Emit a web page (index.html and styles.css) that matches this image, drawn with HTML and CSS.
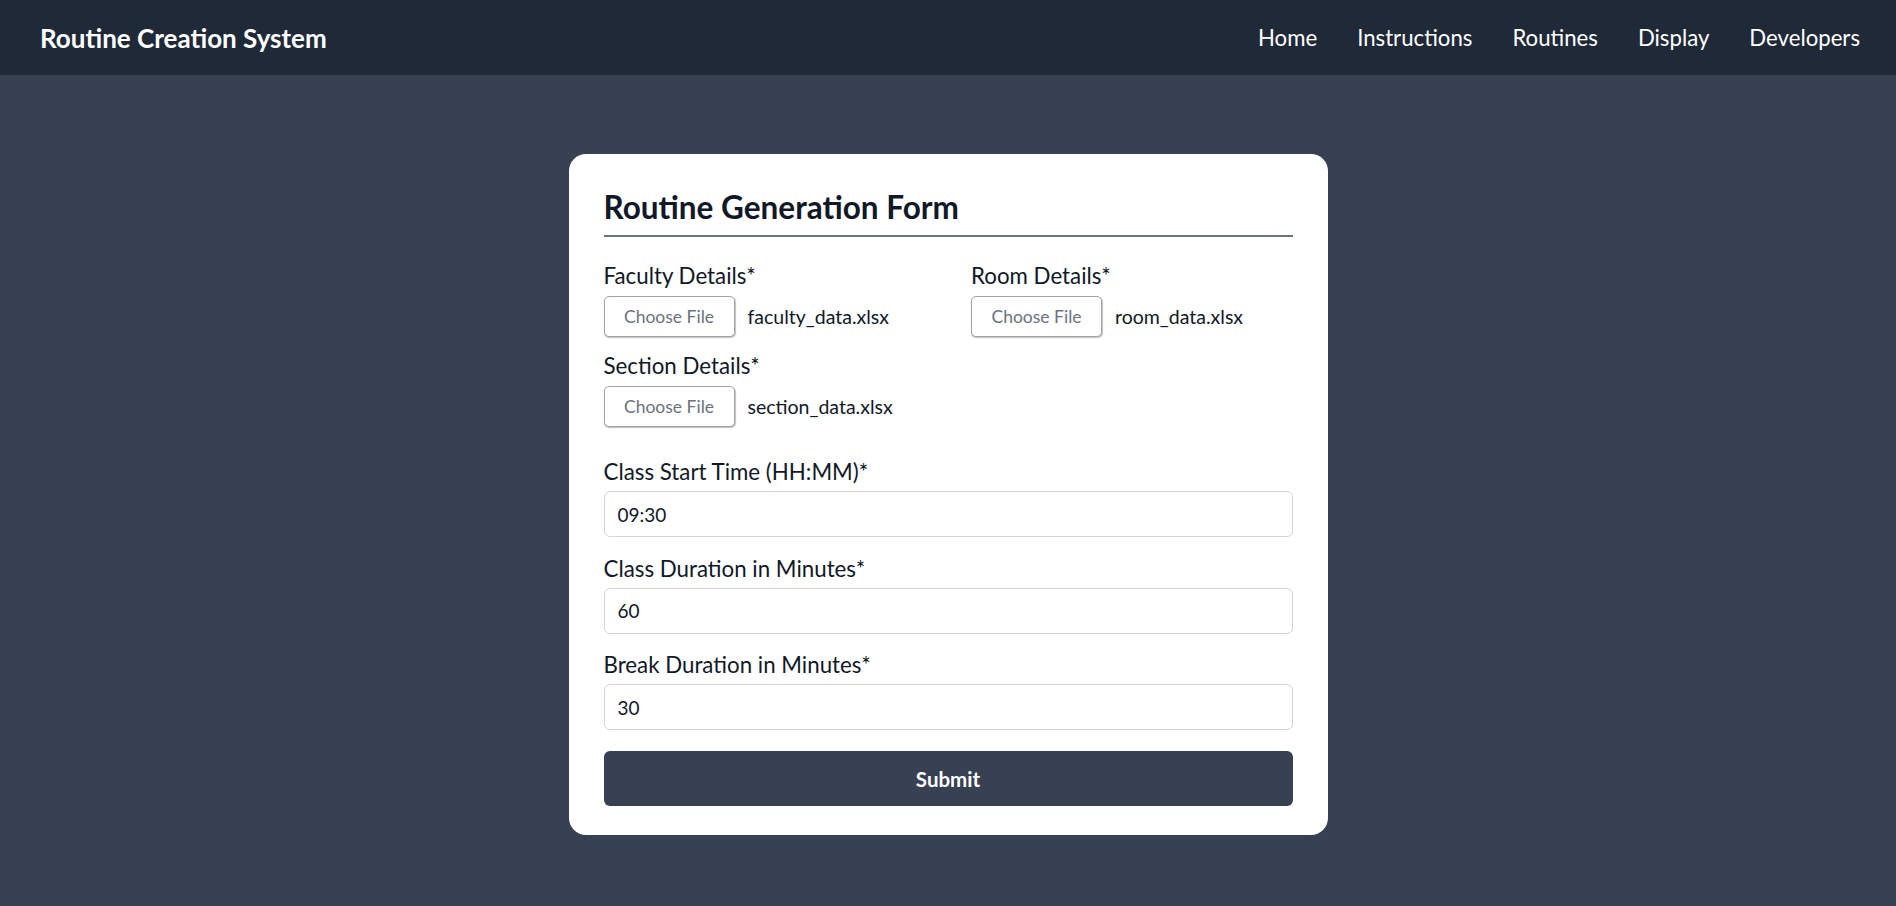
FILE: index.html
```html
<!DOCTYPE html>
<html lang="en">
<head>
<meta charset="utf-8">
<title>Routine Creation System</title>
<link rel="stylesheet" href="styles.css">
</head>
<body>
<header class="navbar">
  <div class="brand">Routine Creation System</div>
  <nav class="nav-links">
    <a href="#">Home</a>
    <a href="#">Instructions</a>
    <a href="#">Routines</a>
    <a href="#">Display</a>
    <a href="#">Developers</a>
  </nav>
</header>
<main class="main">
  <form class="card">
    <h2 class="card-title">Routine Generation Form</h2>
    <div class="file-grid">
      <div class="field">
        <label class="field-label">Faculty Details*</label>
        <div class="file-row">
          <button type="button" class="file-btn">Choose File</button>
          <span class="file-name">faculty_data.xlsx</span>
        </div>
      </div>
      <div class="field">
        <label class="field-label">Room Details*</label>
        <div class="file-row">
          <button type="button" class="file-btn">Choose File</button>
          <span class="file-name">room_data.xlsx</span>
        </div>
      </div>
      <div class="field">
        <label class="field-label">Section Details*</label>
        <div class="file-row">
          <button type="button" class="file-btn">Choose File</button>
          <span class="file-name">section_data.xlsx</span>
        </div>
      </div>
    </div>
    <div class="text-fields">
      <div class="field">
        <label class="field-label">Class Start Time (HH:MM)*</label>
        <input class="text-input" type="text" value="09:30">
      </div>
      <div class="field">
        <label class="field-label">Class Duration in Minutes*</label>
        <input class="text-input" type="text" value="60">
      </div>
      <div class="field">
        <label class="field-label">Break Duration in Minutes*</label>
        <input class="text-input" type="text" value="30">
      </div>
    </div>
    <button type="button" class="submit-btn">Submit</button>
  </form>
</main>
</body>
</html>
```
FILE: styles.css
```css
* { box-sizing: border-box; }
html, body { margin: 0; padding: 0; }
body {
  background: #374151;
  font-family: Lato, "Open Sans", sans-serif;
  color: #111827;
  min-height: 906px;
}
.navbar {
  height: 75px;
  background: #1f2937;
  display: flex;
  align-items: center;
  justify-content: space-between;
  padding: 0 36px 0 40px;
}
.brand {
  color: #ffffff;
  font-weight: 700;
  font-size: 26px;
  line-height: 30px;
}
.nav-links {
  display: flex;
  gap: 40px;
}
.nav-links a {
  color: #ffffff;
  text-decoration: none;
  font-size: 22.2px;
  line-height: 28px;
}
.main {
  padding-top: 79px;
}
.card {
  width: 759px;
  margin: 0 auto;
  background: #ffffff;
  border-radius: 17px;
  padding: 35px 35px 29px;
}
.card-title {
  margin: 0 0 24px;
  font-size: 31.5px;
  line-height: 36px;
  font-weight: 700;
  color: #111827;
  padding-bottom: 10px;
  border-bottom: 2px solid #6b7280;
}
.file-grid {
  display: grid;
  grid-template-columns: 1fr 1fr;
  column-gap: 46px;
  row-gap: 14px;
}
.field-label {
  display: block;
  font-size: 22.3px;
  line-height: 30px;
  color: #111827;
}
.file-grid .field-label { margin-bottom: 5px; }
.file-row {
  display: flex;
  align-items: center;
  gap: 13px;
}
.file-btn {
  width: 131px;
  height: 41px;
  background: #ffffff;
  border: 1px solid #a3a3a3;
  border-radius: 5px;
  box-shadow: 0.5px 1px 1px rgba(0,0,0,0.25);
  font-family: Lato, "Open Sans", sans-serif;
  font-size: 17.5px;
  color: #6b7280;
  padding: 0;
}
.file-name {
  font-size: 19.5px;
  color: #111827;
}
.text-fields {
  margin-top: 30px;
  display: flex;
  flex-direction: column;
  gap: 16.5px;
}
.text-fields .field-label { margin-bottom: 4px; }
.text-input {
  display: block;
  width: 100%;
  height: 46px;
  border: 1px solid #d1d5db;
  border-radius: 6px;
  padding: 0 13px;
  font-family: Lato, "Open Sans", sans-serif;
  font-size: 19px;
  color: #111827;
  background: #ffffff;
}
.submit-btn {
  display: block;
  width: 100%;
  height: 55px;
  margin-top: 21px;
  background: #374151;
  color: #ffffff;
  border: none;
  border-radius: 6px;
  font-family: Lato, "Open Sans", sans-serif;
  font-weight: 700;
  font-size: 20.5px;
}
```
